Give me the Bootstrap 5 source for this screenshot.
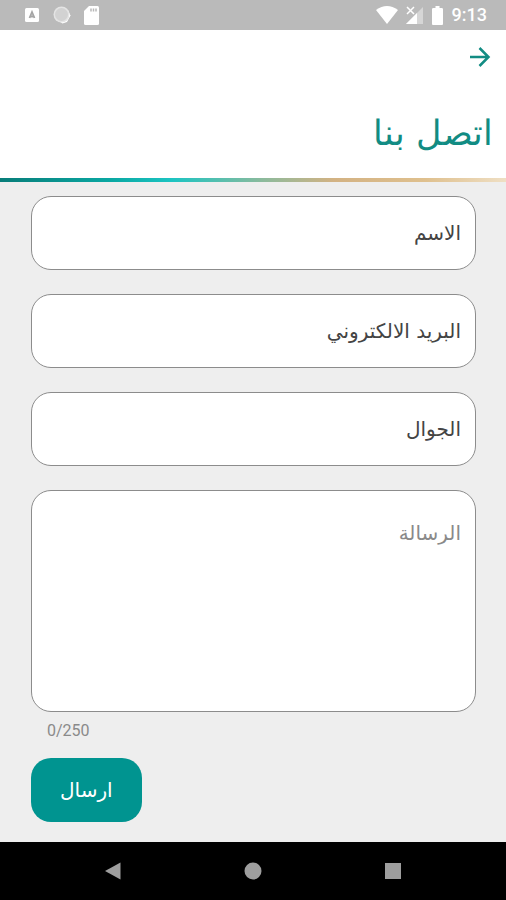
<!DOCTYPE html>
<html lang="ar" dir="rtl">
<head>
<meta charset="utf-8">
<meta name="viewport" content="width=device-width, initial-scale=1">
<title>اتصل بنا</title>
<link href="https://cdn.jsdelivr.net/npm/bootstrap@5.3.0/dist/css/bootstrap.min.css" rel="stylesheet">
<style>
  body { background: #eee; font-family: "DejaVu Sans", sans-serif; }
  .status-bar { background: #bababa; height: 30px; padding: 0 19px 0 24px; font: 500 18px/30px Roboto, sans-serif; }
  .status-bar svg, .system-nav svg, .back-link svg { display: block; }
  .notice-icons { gap: 13px; }
  .back-link { color: #128c83; padding: 15px 15px 0; }
  .page-title { color: #128c83; font-size: 35px; font-weight: 200; line-height: 56px; padding: 0 13px; margin: 36px 0 17px; }
  .accent-line { height: 4px; background: linear-gradient(to right, #087d79, #0aa8a3 22%, #1cc4c2 34%, #8cba9c 52%, #d3b283 66%, #dfc08e 84%, #efdfc4); }
  .contact-form { padding: 14px 30px 18px 31px; gap: 24px; }
  .contact-form .form-control { border: 1px solid #8c8c8c; border-radius: 20px; background: #fff; color: #444; font-size: 20px; line-height: 28px; padding: 22px 14px; }
  .contact-form .form-control::placeholder { color: #444; opacity: 1; }
  .contact-form textarea.form-control { height: 222px; padding-top: 28px; resize: none; }
  .contact-form textarea.form-control::placeholder { color: #8a8a8a; }
  .char-count { color: #8a8a8a; font: 400 16px/20px Roboto, sans-serif; padding: 9px 16px 17px; }
  .btn-send, .btn-send:hover { background: #009490; color: #fff; border: 0; border-radius: 20px; font-size: 20px; line-height: 28px; padding: 18px 29px; }
  .system-nav { background: #000; height: 58px; padding: 0 43px; }
  .system-nav .btn { border: 0; }
</style>
</head>
<body class="min-vh-100 d-flex flex-column">
<div class="status-bar d-flex justify-content-between align-items-center text-white" dir="ltr">
  <div class="notice-icons d-flex align-items-center">
    <svg width="16" height="18" viewBox="0 0 16 18"><rect x="1" y="2" width="14" height="14" rx="1.500" fill="#fff"/><path d="M5.500 12 8 6l2.500 6M6.500 10.500h3" fill="none" stroke="#a5a5a5" stroke-width="1.800"/></svg>
    <svg width="18" height="18" viewBox="0 0 18 18"><path d="M15 4 17.500 9.500 14 16 9.500 17.500 4 14z" fill="#fff"/><circle cx="8.500" cy="8.500" r="8" fill="#e4e4e4"/><circle cx="8.500" cy="8.500" r="6.500" fill="#d2d2d2"/></svg>
    <svg width="15" height="19" viewBox="0 0 15 19"><path d="M5 0h8.500Q15 0 15 1.500v16Q15 19 13.500 19h-12Q0 19 0 17.500V5z" fill="#fff"/><path d="M7 2.500v3M9.500 2.500v3M12 2.500v3" stroke="#b8b8b8" stroke-width="1.500"/></svg>
  </div>
  <div class="d-flex align-items-center gap-2">
    <svg width="22" height="18" viewBox="0 0 22 18"><path d="M0 4Q11-4 22 4L11 18z" fill="#fff"/></svg>
    <svg width="18" height="18" viewBox="0 0 18 18"><path d="M17 1v17H0z" fill="#d6d6d6"/><path d="M11 7v11H0z" fill="#fff"/><path d="M0 0h10v8H0z" fill="#bababa"/><path d="m1 1 7 7m0-7L1 8" stroke="#fff" stroke-width="1.500"/></svg>
    <svg width="12" height="19" viewBox="0 0 12 19"><path d="M3.500 0h4v2h2q1.500 0 1.500 1v15q0 1-1 1H1q-1 0-1-1V3q0-1 1.500-1h2z" fill="#fff"/></svg>
    <span>9:13</span>
  </div>
</div>
<header class="bg-white">
  <div class="d-flex">
    <a href="#" class="back-link" aria-label="رجوع"><svg width="22" height="24" viewBox="0 0 22 24"><path d="M1 12h18M10.500 3l9 9-9 9" fill="none" stroke="currentColor" stroke-width="2.500"/></svg></a>
  </div>
  <h1 class="page-title">اتصل بنا</h1>
  <div class="accent-line"></div>
</header>
<main class="flex-grow-1">
  <form class="contact-form d-flex flex-column">
    <div><input type="text" class="form-control" aria-label="الاسم" placeholder="الاسم"></div>
    <div><input type="email" class="form-control" aria-label="البريد الالكتروني" placeholder="البريد الالكتروني" dir="rtl"></div>
    <div><input type="tel" class="form-control" aria-label="الجوال" placeholder="الجوال" dir="rtl"></div>
    <div>
      <textarea class="form-control" aria-label="الرسالة" placeholder="الرسالة" maxlength="250"></textarea>
      <div class="char-count" dir="ltr">0/250</div>
      <div class="d-flex justify-content-end"><button type="button" class="btn btn-send">ارسال</button></div>
    </div>
  </form>
</main>
<nav class="system-nav d-flex align-items-center" dir="ltr" aria-label="النظام">
  <button type="button" class="btn flex-fill d-flex justify-content-center" aria-label="السابق"><svg width="18" height="18" viewBox="0 0 18 18"><path d="M1 9 16.500 .500v17z" fill="#9e9e9e"/></svg></button>
  <button type="button" class="btn flex-fill d-flex justify-content-center" aria-label="الرئيسية"><svg width="18" height="18" viewBox="0 0 18 18"><circle cx="9" cy="9" r="8.500" fill="#9e9e9e"/></svg></button>
  <button type="button" class="btn flex-fill d-flex justify-content-center" aria-label="التطبيقات"><svg width="18" height="18" viewBox="0 0 18 18"><path d="M1 1h16v16H1z" fill="#9e9e9e"/></svg></button>
</nav>
<script src="https://cdn.jsdelivr.net/npm/bootstrap@5.3.0/dist/js/bootstrap.bundle.min.js"></script>
</body>
</html>
